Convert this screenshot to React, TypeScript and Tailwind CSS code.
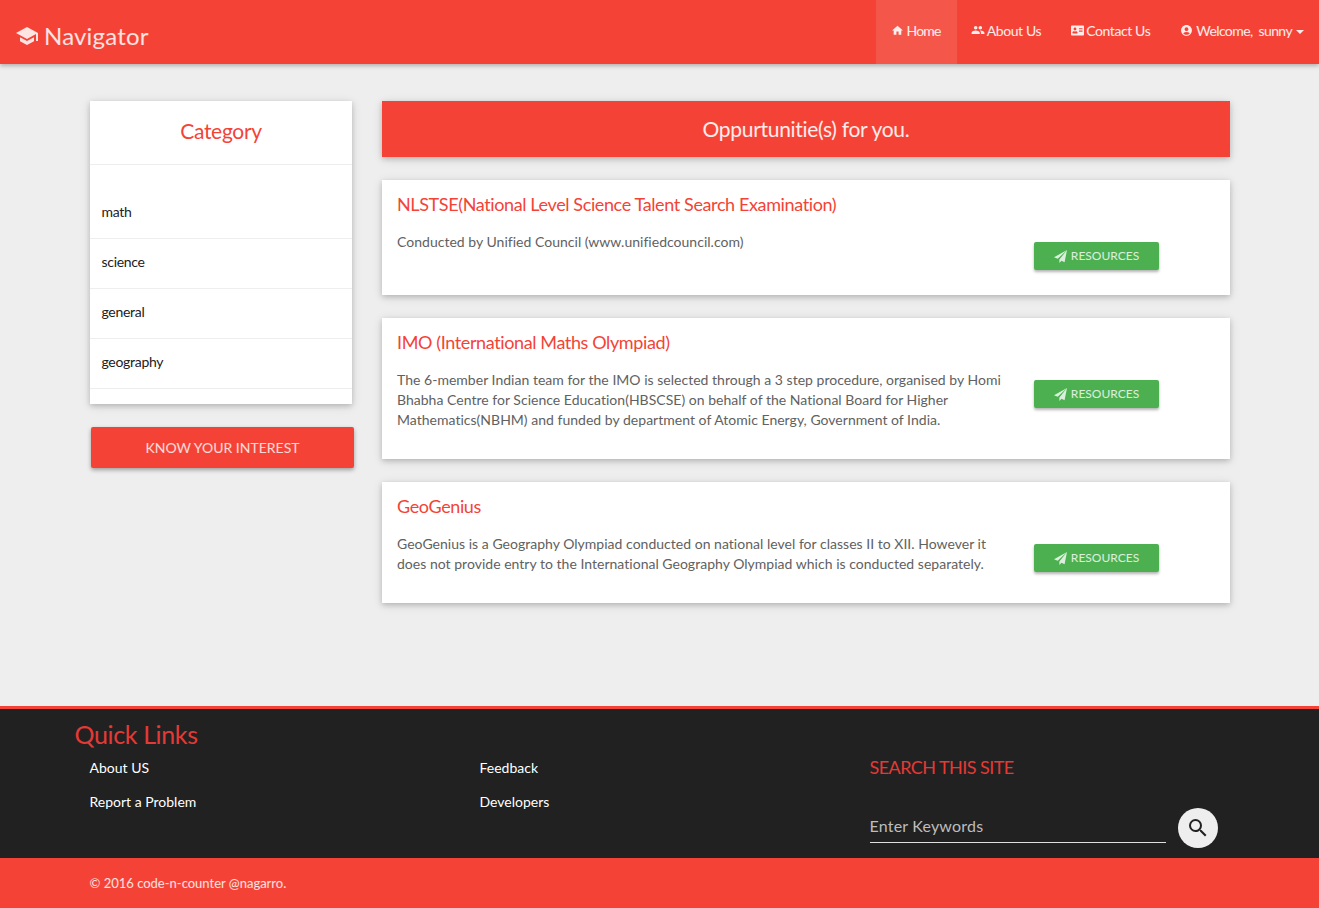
import { FaAddressCard } from 'react-icons/fa'
import { MdAccountCircle, MdHome, MdPeople, MdSchool, MdSearch } from 'react-icons/md'

const categories = ['math', 'science', 'general', 'geography']

const opportunities = [
  {
    title: 'NLSTSE(National Level Science Talent Search Examination)',
    body: ['Conducted by Unified Council (www.unifiedcouncil.com)'],
    height: 'h-[115px]',
  },
  {
    title: 'IMO (International Maths Olympiad)',
    body: [
      'The 6-member Indian team for the IMO is selected through a 3 step procedure, organised by Homi',
      'Bhabha Centre for Science Education(HBSCSE) on behalf of the National Board for Higher',
      'Mathematics(NBHM) and funded by department of Atomic Energy, Government of India.',
    ],
    height: 'h-[141px]',
  },
  {
    title: 'GeoGenius',
    body: [
      'GeoGenius is a Geography Olympiad conducted on national level for classes II to XII. However it',
      'does not provide entry to the International Geography Olympiad which is conducted separately.',
    ],
    height: 'h-[121px]',
  },
]

const cardShadow = 'shadow-[0_2px_5px_0_rgba(0,0,0,0.16),0_2px_10px_0_rgba(0,0,0,0.12)]'

const NavItem = ({
  icon,
  label,
  className,
  tracking,
}: {
  icon: React.ReactNode
  label: string
  className: string
  tracking: string
}) => (
  <a className={`flex h-[64px] items-center pb-[4px] pr-[15px] text-[14px] text-white/90 ${className}`}>
    {icon}
    <span className={tracking}>{label}</span>
  </a>
)

const SendIcon = () => (
  <svg viewBox="0 0 16 16" className="size-[13px] fill-current">
    <path d="M16 0 0 9l4.6 1.9L16 0ZM16 0 6.6 11.8V16l2.6-2.9 3.8 1.9L16 0Z" />
  </svg>
)

export default function App() {
  return (
    <div className="flex min-h-[908px] flex-col bg-[#eeeeee] font-['Lato',sans-serif]">
      <header className="relative z-10 flex h-[64px] items-center justify-between bg-[#f44336] pl-[15px] shadow-[0_2px_4px_rgba(0,0,0,0.25)]">
        <a className="flex items-center gap-[5px] pt-[8px] text-[24px] tracking-[0.2px] text-white/85">
          <MdSchool size={24} />
          <span>Navigator</span>
        </a>
        <nav className="flex items-center">
          <NavItem
            className="gap-[3px] bg-white/10 pl-[15px]"
            icon={<MdHome size={13} />}
            label="Home"
            tracking="mr-[1px] tracking-[-0.8px]"
          />
          <NavItem
            className="gap-[2px] pl-[14px]"
            icon={<MdPeople size={14} />}
            label="About Us"
            tracking="tracking-[-0.4px]"
          />
          <NavItem
            className="gap-[2px] pl-[15px]"
            icon={<FaAddressCard size={13} />}
            label="Contact Us"
            tracking="tracking-[-0.4px]"
          />
          <a className="flex h-[64px] items-center gap-[3px] pb-[4px] pl-[15px] pr-[15px] text-[14px] text-white/90">
            <MdAccountCircle size={13} />
            <span className="tracking-[-0.6px]">Welcome,&nbsp; sunny</span>
            <span className="ml-[1px] mt-[4px] border-x-[4px] border-t-[4px] border-x-transparent border-t-white/90" />
          </a>
        </nav>
      </header>

      <main className="flex h-[642px] items-start gap-[30px] pl-[90px] pr-[89px] pt-[37px]">
        <aside className="w-[262px] shrink-0">
          <div className={`h-[303px] bg-white ${cardShadow}`}>
            <h2 className="flex h-[64px] items-center justify-center border-b border-[#eeeeee] pb-[4px] text-[21px] tracking-[-0.3px] text-[#f44336]">
              Category
            </h2>
            <ul className="pt-[24px]">
              {categories.map((c) => (
                <li
                  key={c}
                  className="flex h-[50px] items-center border-b border-[#eeeeee] pb-[4px] pl-[11.5px] text-[14px] tracking-[-0.3px] text-[#212121]"
                >
                  {c}
                </li>
              ))}
            </ul>
          </div>
          <button className="ml-[1px] mt-[23px] flex h-[41px] w-[263px] items-center justify-center rounded-[2px] bg-[#f44336] text-[14px] uppercase text-white/80 shadow-[0_2px_4px_rgba(0,0,0,0.35)]">
            Know your interest
          </button>
        </aside>

        <section className="flex min-w-0 flex-1 flex-col gap-[23px]">
          <h1 className={`flex h-[56px] items-center justify-center bg-[#f44336] text-[21px] tracking-[-0.3px] text-white/90 ${cardShadow}`}>
            Oppurtunitie(s) for you.
          </h1>
          {opportunities.map((o) => (
            <article key={o.title} className={`${o.height} bg-white px-[15px] pt-[12px] ${cardShadow}`}>
              <h3 className="text-[18px] leading-[24px] tracking-[-0.38px] text-[#f44336]">{o.title}</h3>
              <div className="mt-[16px] flex items-start">
                <div className="w-[637px] shrink-0 text-[14px] leading-[20px] tracking-[0.02px] text-[#616161]">
                  {o.body.map((line) => (
                    <p key={line} className="whitespace-nowrap">{line}</p>
                  ))}
                </div>
                <button className="mt-[10px] flex h-[28px] w-[125px] items-center justify-center gap-[4px] rounded-[2px] bg-[#4caf50] text-[12px] uppercase text-white/80 shadow-[0_2px_3px_rgba(0,0,0,0.3)]">
                  <SendIcon />
                  Resources
                </button>
              </div>
            </article>
          ))}
        </section>
      </main>

      <footer className="h-[152px] border-t-[3px] border-[#f44336] bg-[#212121]">
        <h2 className="pl-[74.5px] pt-[9px] text-[25px] leading-[32px] tracking-[-0.36px] text-[#e53935]">Quick Links</h2>
        <div className="flex pl-[89.5px]">
          <ul className="w-[390px] text-[14px] text-white">
            <li className="flex h-[34px] items-center">About US</li>
            <li className="flex h-[34px] items-center">Report a Problem</li>
          </ul>
          <ul className="w-[390px] text-[14px] text-white">
            <li className="flex h-[34px] items-center">Feedback</li>
            <li className="flex h-[34px] items-center">Developers</li>
          </ul>
          <div className="w-[348px]">
            <h3 className="flex h-[34px] items-center text-[18px] uppercase tracking-[-0.55px] text-[#e53935]">Search this site</h3>
            <div className="mt-[24px] flex items-start gap-[12px]">
              <div className="flex h-[35px] w-[296px] items-center border-b border-[#e0e0e0] pt-[1px] text-[16px] tracking-[0.2px] text-[#bdbdbd]">
                Enter Keywords
              </div>
              <button className="flex size-[40px] items-center justify-center rounded-full bg-[#eeeeee] text-[#212121]">
                <MdSearch size={24} />
              </button>
            </div>
          </div>
        </div>
      </footer>

      <div className="flex h-[50px] items-center bg-[#f44336] pl-[89.5px] pt-[1px] text-[13px] text-white/85">
        © 2016 code-n-counter @nagarro.
      </div>
    </div>
  )
}
